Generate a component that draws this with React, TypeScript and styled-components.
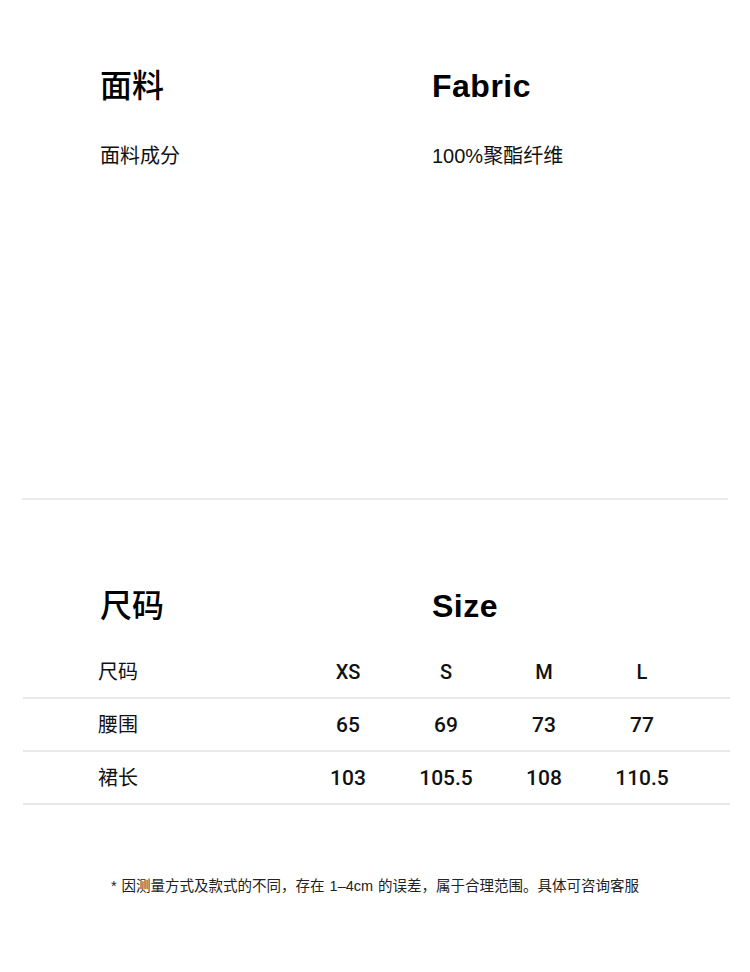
import React from 'react';
import styled, { createGlobalStyle } from 'styled-components';

const GlobalStyle = createGlobalStyle`
  html, body {
    margin: 0;
    padding: 0;
    background: #ffffff;
  }
  body {
    font-family: "Liberation Sans", "Noto Sans CJK SC", sans-serif;
    color: #111;
  }
`;

const Page = styled.div`
  width: 750px;
  min-height: 972px;
  background: #fff;
`;

const FabricSection = styled.section`
  height: 498px;
  padding-top: 67px;
  box-sizing: border-box;
`;

const SpecGrid = styled.div`
  display: grid;
  grid-template-columns: 332px 1fr;
  padding-left: 100px;
`;

const Heading = styled.h2`
  margin: 0;
  font-size: 32px;
  line-height: 38px;
  font-weight: 700;
  color: #000;
  font-family: "Liberation Sans", "Noto Sans CJK SC", sans-serif;
  letter-spacing: 0.5px;
`;

const CnHeading = styled(Heading)`
  font-weight: 500;
  letter-spacing: 0;
`;

const SpecText = styled.div`
  margin-top: 37px;
  font-size: 20px;
  line-height: 28px;
  color: #111;
`;

const Divider = styled.hr`
  margin: 0 22px;
  border: none;
  height: 2px;
  background: #ebebeb;
`;

const SizeSection = styled.section`
  padding-top: 87px;
`;

const SizeTable = styled.div`
  margin: 21px 20px 0 23px;
`;

const Row = styled.div`
  display: grid;
  grid-template-columns: 276px repeat(4, 98px) 1fr;
  align-items: center;
  height: 51px;
  border-bottom: 2px solid #e9e9e9;
`;

const Label = styled.div`
  padding-left: 75px;
  font-size: 20px;
  color: #111;
  transform: translateY(-1px);
`;

const Cell = styled.div<{ $header?: boolean }>`
  text-align: center;
  font-family: Roboto, "Liberation Sans", sans-serif;
  font-size: ${p => (p.$header ? '20px' : '21px')};
  font-weight: 500;
  color: #111;
`;

const Note = styled.p`
  margin: 71px 0 0;
  text-align: center;
  font-size: 14.5px;
  line-height: 20px;
  color: #222;
  word-spacing: 1px;
`;

const sizes = ['XS', 'S', 'M', 'L'];
const rows = [
  { label: '腰围', values: ['65', '69', '73', '77'] },
  { label: '裙长', values: ['103', '105.5', '108', '110.5'] },
];

export default function App() {
  return (
    <Page>
      <GlobalStyle />
      <FabricSection>
        <SpecGrid>
          <CnHeading>面料</CnHeading>
          <Heading>Fabric</Heading>
          <SpecText>面料成分</SpecText>
          <SpecText>100%聚酯纤维</SpecText>
        </SpecGrid>
      </FabricSection>
      <Divider />
      <SizeSection>
        <SpecGrid>
          <CnHeading>尺码</CnHeading>
          <Heading>Size</Heading>
        </SpecGrid>
        <SizeTable>
          <Row>
            <Label>尺码</Label>
            {sizes.map(s => (
              <Cell key={s} $header>{s}</Cell>
            ))}
          </Row>
          {rows.map(r => (
            <Row key={r.label}>
              <Label>{r.label}</Label>
              {r.values.map((v, i) => (
                <Cell key={i}>{v}</Cell>
              ))}
            </Row>
          ))}
        </SizeTable>
      </SizeSection>
      <Note>* 因测量方式及款式的不同，存在 1–4cm 的误差，属于合理范围。具体可咨询客服</Note>
    </Page>
  );
}
